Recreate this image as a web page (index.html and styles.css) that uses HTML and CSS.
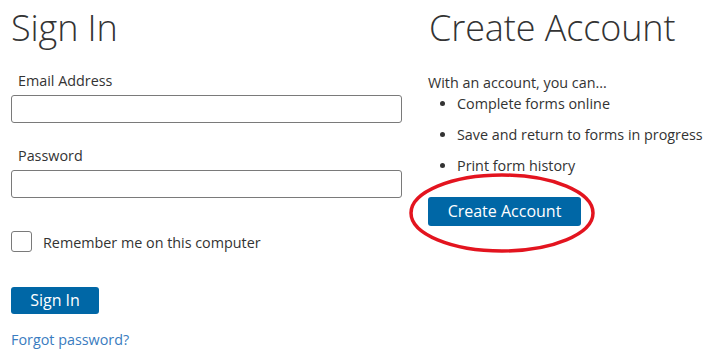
FILE: index.html
```html
<!DOCTYPE html>
<html lang="en">
<head>
<meta charset="utf-8">
<title>Sign In</title>
<link rel="stylesheet" href="styles.css">
</head>
<body>
<div class="page">
  <section class="col signin">
    <h1 class="title">Sign In</h1>
    <label class="field-label" for="email">Email Address</label>
    <input class="text-input" id="email" type="text">
    <label class="field-label pw" for="pw">Password</label>
    <input class="text-input" id="pw" type="password">
    <div class="remember">
      <span class="checkbox"></span>
      <span class="remember-text">Remember me on this computer</span>
    </div>
    <button class="btn btn-signin" type="button">Sign In</button>
    <a class="forgot" href="#">Forgot password?</a>
  </section>
  <section class="col create">
    <h1 class="title">Create Account</h1>
    <p class="intro">With an account, you can...</p>
    <ul class="benefits">
      <li>Complete forms online</li>
      <li>Save and return to forms in progress</li>
      <li>Print form history</li>
    </ul>
    <div class="btn-wrap">
      <button class="btn btn-create" type="button">Create Account</button>
      <svg class="circle" width="190" height="82" viewBox="0 0 190 82">
        <ellipse cx="95" cy="41" rx="91" ry="38" fill="none" stroke="#e3141f" stroke-width="3.5"/>
      </svg>
    </div>
  </section>
</div>
</body>
</html>
```

FILE: styles.css
```css
* { box-sizing: border-box; }
html, body { margin: 0; padding: 0; background: #fff; }
body {
  font-family: "Open Sans", "Liberation Sans", sans-serif;
  font-size: 14.35px;
  color: #333;
}
.page {
  display: flex;
  padding: 0 0 0 11px;
  gap: 27px;
}
.col { display: flex; flex-direction: column; }
.signin { width: 391px; }
.create { width: 290px; }
.title {
  margin: 4px 0 0 0;
  font-weight: 300;
  font-size: 36px;
  line-height: 48px;
  color: #333;
  letter-spacing: -0.1px;
}
.field-label {
  display: block;
  margin: 18px 0 0 7px;
  line-height: 22px;
}
.field-label.pw { margin-top: 22px; }
.text-input {
  display: block;
  width: 391px;
  height: 28px;
  margin-top: 3px;
  border: 1px solid #7a7a7a;
  border-radius: 3px;
  background: #fff;
  padding: 0;
}
.remember {
  display: flex;
  align-items: center;
  margin-top: 33px;
  height: 21px;
}
.checkbox {
  width: 21px;
  height: 21px;
  border: 1px solid #7a7a7a;
  border-radius: 3px;
  background: #fff;
}
.remember-text { margin-left: 11px; line-height: 21px; padding-top: 2px; }
.btn {
  font-family: "Open Sans", "Liberation Sans", sans-serif;
  font-size: 16px;
  color: #fff;
  background: #0067a6;
  border: none;
  border-radius: 3px;
  padding: 0;
  height: 27px;
  line-height: 27px;
  cursor: pointer;
}
.btn-signin {
  width: 88px;
  margin-top: 35px;
  align-self: flex-start;
}
.forgot {
  margin-top: 16px;
  color: #3a7cc0;
  text-decoration: none;
  line-height: 20px;
}
.intro {
  margin: 21px 0 0 -1px;
  line-height: 20px;
}
.benefits {
  margin: 0;
  padding: 0 0 0 28px;
  list-style: disc;
}
.benefits li {
  line-height: 21px;
  margin-bottom: 10px;
}
.benefits li:last-child { margin-bottom: 0; }
.btn-wrap {
  position: relative;
  margin-top: 21px;
  margin-left: -1px;
  width: 153px;
}
.btn-create {
  width: 153px;
  height: 29px;
  line-height: 29px;
}
.circle {
  position: absolute;
  left: -21px;
  top: -25px;
  pointer-events: none;
}
```
